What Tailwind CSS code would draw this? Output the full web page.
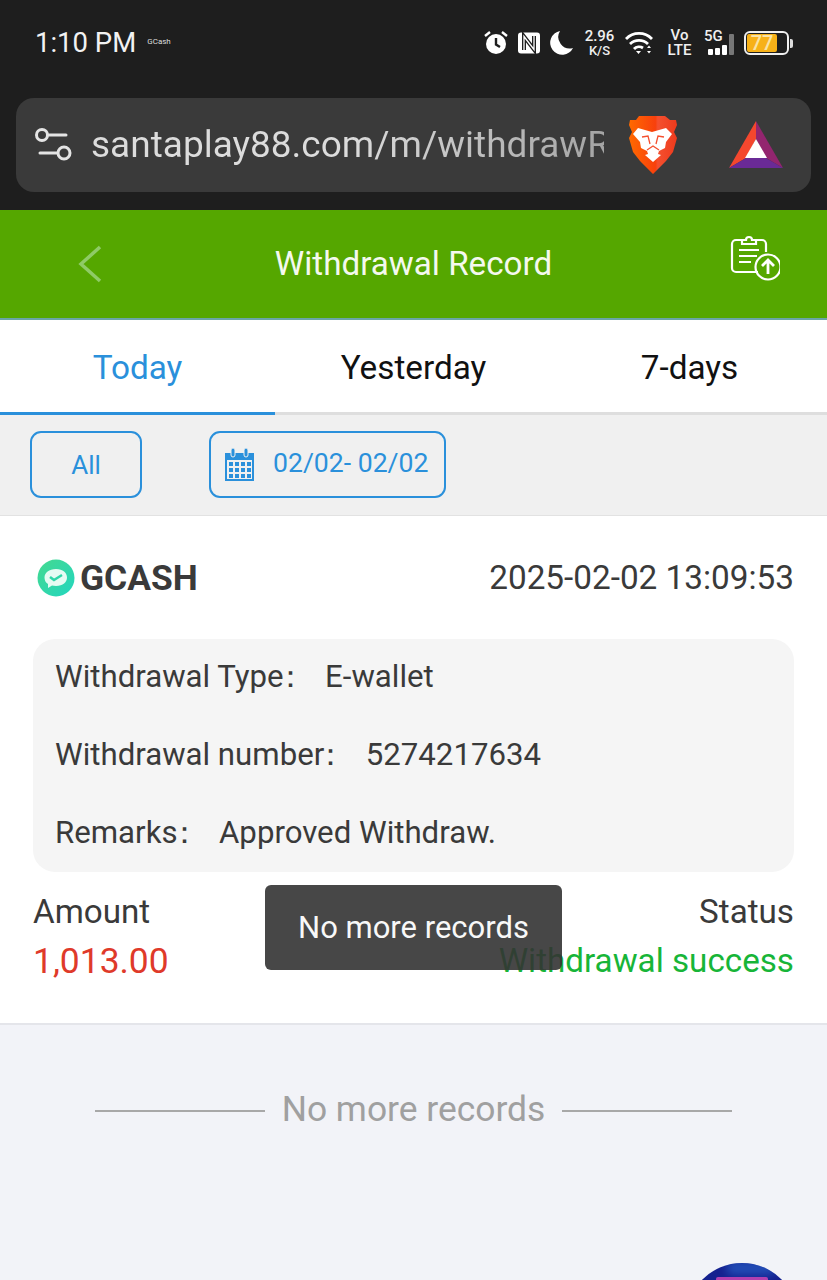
<!DOCTYPE html>
<html lang="en">
<head>
  <meta charset="UTF-8">
  <meta name="viewport" content="width=device-width, initial-scale=1.0">
  <title>Withdrawal Record</title>
  <script src="https://cdn.jsdelivr.net/npm/@tailwindcss/browser@4"></script>
</head>
<body class="font-['Roboto',sans-serif] bg-[#f2f3f8]">
  <div class="relative w-[827px] h-[1280px] overflow-hidden">

    <!-- status bar + browser bar -->
    <div class="h-[210px] bg-[#1e1e1e]">
      <div class="h-[98px] pl-[35px] pr-[34px] pt-[24px] flex items-start text-white">
        <span class="text-[27.5px] leading-[38px] text-[#f2f2f2]">1:10 PM</span>
        <span class="ml-[11px] mt-[13px] text-[8px] leading-[10px] text-[#dddddd]">GCash</span>
        <div class="ml-auto flex items-center h-[38px]">
          <svg width="24" height="24" viewBox="0 0 24 24" fill="#fff"><circle cx="12" cy="13" r="10"/><path d="M12 7v6.5l4 2.5" fill="none" stroke="#1e1e1e" stroke-width="2.4"/><path d="M1 5l5-4M23 5l-5-4" stroke="#fff" stroke-width="2.4"/></svg>
          <svg class="ml-[9px]" width="24" height="22" viewBox="0 0 24 22"><rect x="1" y="0.500" width="22" height="21" rx="3" fill="#fff"/><path d="M7 18V4.500l10 13V4" fill="none" stroke="#1e1e1e" stroke-width="4"/><path d="M7 18V4.500l10 13V4" fill="none" stroke="#fff" stroke-width="1.300"/></svg>
          <svg class="ml-[9px]" width="23" height="24" viewBox="0 0 23 24"><path d="M10 0a12 12 0 1 0 13 17A11.500 11.500 0 0 1 10 0z" fill="#fff"/></svg>
          <div class="ml-[12px] w-[29px] flex flex-col items-center text-[#f0f0f0] font-medium">
            <span class="text-[15px] leading-[15px]">2.96</span>
            <span class="text-[13px] leading-[14px]">K/S</span>
          </div>
          <svg class="ml-[11px]" width="28" height="24" viewBox="0 0 28 24" fill="none" stroke="#fff" stroke-width="2.8"><path d="M1 8a18 18 0 0 1 26 0"/><path d="M5 13a13 13 0 0 1 18 0"/><path d="M9 18a7 7 0 0 1 9 -1"/><path d="M11 20h5l-2.500 3z" fill="#fff" stroke="none"/><path d="M22 17l2-2.500 2 2.500zM22 20l2 2.500 2-2.500z" fill="#fff" stroke="none"/></svg>
          <div class="ml-[15px] w-[23px] flex flex-col items-center text-[#f0f0f0] font-medium">
            <span class="text-[15px] leading-[15px]">Vo</span>
            <span class="text-[15px] leading-[15px]">LTE</span>
          </div>
          <div class="relative ml-[13px] w-[33px] h-[26px]">
            <span class="absolute left-0 -top-[1px] text-[15px] leading-[15px] font-medium text-[#f0f0f0]">5G</span>
            <div class="absolute left-[4px] bottom-[1px] flex items-end gap-[2px]">
              <span class="w-[5px] h-[6px] rounded-[1px] bg-white"></span>
              <span class="w-[5px] h-[7px] rounded-[1px] bg-white"></span>
              <span class="w-[5px] h-[10px] rounded-[1px] bg-white"></span>
              <span class="w-[5px] h-[21px] rounded-[1px] bg-[#777777]"></span>
            </div>
          </div>
          <div class="ml-[7px] flex items-center">
            <div class="w-[45px] h-[24px] rounded-[6px] border-2 border-[#f0f0f0] p-[1px]">
              <div class="w-[30px] h-[18px] rounded-[2px] bg-[#f7b118] text-[#f9e3a6] text-[20px] leading-[18px] text-center font-medium">77</div>
            </div>
            <span class="ml-[1px] w-[3px] h-[9px] rounded-r-[2px] bg-[#dddddd]"></span>
          </div>
        </div>
      </div>
      <div class="mx-[16px] h-[94px] w-[795px] rounded-[18px] bg-[#3a3a3a] flex items-center">
        <svg class="ml-[19px]" width="37" height="34" viewBox="0 0 37 34" fill="none" stroke="#e4e4e4" stroke-width="3"><circle cx="7" cy="7" r="5.500"/><path d="M13 7h18" stroke-linecap="round"/><circle cx="29" cy="25" r="6"/><path d="M5 25h17" stroke-linecap="round"/></svg>
        <div class="ml-[19px] w-[513px] overflow-hidden whitespace-nowrap text-[37px] leading-[50px] bg-linear-to-r from-[#dcdcdc] from-50% to-[#a4a4a4] bg-clip-text text-transparent">santaplay88.com/m/withdrawRecord</div>
        <svg class="ml-[24px]" width="50" height="60" viewBox="0 0 50 60">
          <defs><linearGradient id="braveBg" x1="0" y1="0" x2="1" y2="0"><stop offset="0" stop-color="#ff6a00"/><stop offset="0.55" stop-color="#f8400c"/><stop offset="0.6" stop-color="#f4502f"/><stop offset="1" stop-color="#ee3a1c"/></linearGradient></defs>
          <path d="M11 1h26l5 4h6l1 5-3 7 3 6-4 14-7 9-13 13-13-13-7-9-4-14 3-6-3-7 1-5h6z" fill="url(#braveBg)"/>
          <path d="M5 19l5-6 7 2 7 2 7-2 7-2 6 6-6 8-1 6-6 3-1 3 3 1-8 7-8-7 3-1-1-3-6-3-1-6z" fill="#fff"/>
          <path d="M14 22l6-1 2 8M36 22l-6-1-2 8M19 35l6-4 6 4" fill="none" stroke="#f4502f" stroke-width="1.300"/>
        </svg>
        <svg class="ml-[51px]" width="54" height="48" viewBox="0 0 54 48">
          <path d="M27 0L0 47l17-10L27 18z" fill="#f4472e"/>
          <path d="M27 0l27 47-17-10L27 18z" fill="#93256f"/>
          <path d="M0 47h54l-17-10H17z" fill="#6a2a96"/>
          <path d="M27 18l11 19H16z" fill="#fff"/>
        </svg>
      </div>
    </div>

    <!-- header -->
    <header class="h-[110px] bg-[#55a700] border-b-2 border-[#6aa5a8] flex items-center justify-between relative">
      <svg class="ml-[78px]" width="24" height="38" viewBox="0 0 24 38" fill="none" stroke="#8fcb66" stroke-width="3.500"><path d="M22 2L3 19l19 17"/></svg>
      <h1 class="absolute inset-x-0 text-center text-[33.200px] leading-[42px] text-[#f4f9ee]">Withdrawal Record</h1>
      <svg class="mr-[47px] mb-[14px]" width="50" height="48" viewBox="0 0 50 48" fill="none" stroke="#fff" stroke-width="2.200">
        <path d="M28 39H6a4 4 0 0 1-4-4V11a4 4 0 0 1 4-4h6M26 7h6a4 4 0 0 1 4 4v8"/>
        <path d="M12 11V7h4a3 3 0 0 1 6 0h4v4z"/>
        <path d="M9 17h20M9 23h18M9 29h12"/>
        <circle cx="38" cy="34" r="12.500"/>
        <path d="M38 41V28M32 33l6-6 6 6" stroke-width="2.800"/>
      </svg>
    </header>

    <!-- tabs -->
    <nav class="h-[95px] bg-white grid grid-cols-[275px_277px_275px] text-[33.300px]">
      <div class="border-b-[3px] border-[#2a90db] text-[#2a90db] flex items-center justify-center pt-[3px]">Today</div>
      <div class="border-b-[3px] border-[#dedede] text-[#111111] flex items-center justify-center pt-[3px]">Yesterday</div>
      <div class="border-b-[3px] border-[#dedede] text-[#111111] flex items-center justify-center pt-[3px]">7-days</div>
    </nav>

    <!-- filters -->
    <div class="h-[101px] bg-[#f0f0f0] border-b border-[#e2e2e2] flex items-start pt-[16px] pl-[30px] text-[#2a90db]">
      <div class="w-[112px] h-[67px] rounded-[11px] border-2 border-[#2a90db] flex items-center justify-center text-[26px] pt-[2px]">All</div>
      <div class="ml-[67px] w-[237px] h-[67px] rounded-[11px] border-2 border-[#2a90db] flex items-center pl-[13px]">
        <svg width="31" height="35" viewBox="0 0 31 35" fill="#2a90db">
          <path d="M1 6h29v28H1z"/>
          <rect x="7" y="1" width="4" height="9" rx="2" stroke="#f0f0f0"/><rect x="20" y="1" width="4" height="9" rx="2" stroke="#f0f0f0"/>
          <path fill="#f0f0f0" d="M3 13h25v19H3z"/>
          <path d="M5 15h4v4H5zM11 15h4v4h-4zM17 15h4v4h-4zM23 15h4v4h-4zM5 21h4v4H5zM11 21h4v4h-4zM17 21h4v4h-4zM23 21h4v4h-4zM5 27h4v4H5zM11 27h4v4h-4zM17 27h4v4h-4zM23 27h4v4h-4z"/>
        </svg>
        <span class="ml-[18px] text-[26.600px] mb-[3px]">02/02- 02/02</span>
      </div>
    </div>

    <!-- record card -->
    <section class="h-[509px] bg-white border-b-2 border-[#e4e5ea] px-[33px] text-[#3a3a3a]">
      <div class="h-[123px] flex items-center justify-between">
        <div class="flex items-center pl-[4px]">
          <svg width="38" height="38" viewBox="0 0 38 38">
            <defs><linearGradient id="gcashBg" x1="0" y1="0" x2="1" y2="1"><stop offset="0" stop-color="#45d98f"/><stop offset="1" stop-color="#22d6c0"/></linearGradient></defs>
            <circle cx="19" cy="19" r="18.500" fill="url(#gcashBg)"/>
            <path d="M19 10c7 0 11 4 11 8.500S26 27 19 27c-1.500 0-3-.2-4-.5L11 29v-4c-2.500-1.500-3.500-4-3.500-6.500C7.500 14 12 10 19 10z" fill="#e6fbf3"/>
            <path d="M13 18l4 3 8-5" fill="none" stroke="#2fd6a8" stroke-width="2.500"/>
          </svg>
          <span class="ml-[5px] text-[35.400px] leading-[40px] font-bold">GCASH</span>
        </div>
        <span class="text-[33.300px] leading-[40px]">2025-02-02 13:09:53</span>
      </div>
      <div class="h-[233px] rounded-[22px] bg-[#f5f5f5] pl-[22px] pt-[18px] text-[31.200px] leading-[40px] flex flex-col gap-[38px]">
        <div class="whitespace-pre">Withdrawal Type<span class="-ml-[9px] mr-[4px]">：</span>  E-wallet</div>
        <div class="whitespace-pre">Withdrawal number<span class="-ml-[9px] mr-[4px]">：</span>  5274217634</div>
        <div class="whitespace-pre">Remarks<span class="-ml-[9px] mr-[4px]">：</span>  Approved Withdraw.</div>
      </div>
      <div class="mt-[19px] flex justify-between text-[33.200px] leading-[42px]">
        <div>
          <div>Amount</div>
          <div class="mt-[7px] text-[#df3a2a] text-[35.400px]">1,013.00</div>
        </div>
        <div class="text-right">
          <div>Status</div>
          <div class="mt-[7px] text-[#17b538]">Withdrawal success</div>
        </div>
      </div>
    </section>

    <!-- end of list -->
    <div class="mt-[64px] flex items-center justify-center text-[35.400px] leading-[40px] text-[#a0a0a0]">
      <span class="w-[170px] h-[2px] mt-[3px] bg-[#a8a8a8]"></span>
      <span class="mx-[17px]">No more records</span>
      <span class="w-[170px] h-[2px] mt-[3px] bg-[#a8a8a8]"></span>
    </div>

    <!-- toast -->
    <div class="absolute left-[265px] top-[885px] w-[297px] h-[85px] rounded-[6px] bg-[#333333]/90 text-[#f8f8f8] text-[31px] flex items-center justify-center pt-[2px]">No more records</div>

    <!-- floating button, cut off by the screen edge -->
    <div class="absolute left-[686px] top-[1263px] w-[112px] h-[112px] rounded-full bg-[#14208f] overflow-hidden">
      <div class="absolute left-[40px] -top-[2px] w-[50px] h-[14px] rounded-full bg-[#2b6ad0]/60 blur-[4px]"></div>
      <div class="absolute left-[30px] top-[14px] w-[52px] h-[6px] rounded-[2px] bg-[#b040b0]"></div>
    </div>
  </div>
</body>
</html>
